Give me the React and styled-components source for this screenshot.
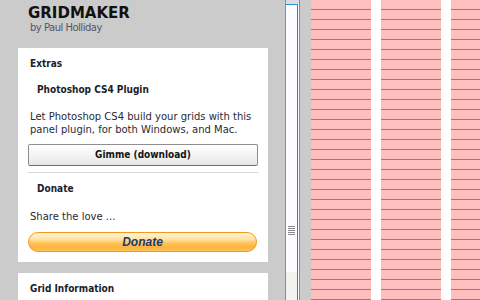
import React from 'react';
import styled, { createGlobalStyle } from 'styled-components';

const Global = createGlobalStyle`
  html, body { margin: 0; padding: 0; background: #cbcbcb; }
  body { width: 480px; height: 300px; overflow: hidden; }
`;

const Page = styled.div`
  display: flex;
  width: 480px;
  height: 300px;
  overflow: hidden;
  background: #cbcbcb;
`;

const Sidebar = styled.aside`
  flex: none;
  width: 285px;
  box-sizing: border-box;
  padding-left: 18px;
  font-family: "DejaVu Sans", Verdana, sans-serif;
  color: #333;
`;

const Header = styled.header`
  height: 48px;
  box-sizing: border-box;
  padding: 4px 0 0 10px;
`;

const Title = styled.h1`
  margin: 0;
  font: bold 15px/18px "DejaVu Sans", Verdana, sans-serif;
  color: #111;
`;

const Byline = styled.div`
  margin-top: 0;
  padding-left: 2px;
  font-size: 10px;
  line-height: 11px;
  letter-spacing: -0.5px;
  color: #5a5462;
`;

const Panel = styled.section`
  width: 250px;
  box-sizing: border-box;
  background: #fff;
  padding: 10px 10px 10px;
  margin-bottom: 11px;
  display: flex;
  flex-direction: column;
`;

const Heading = styled.h2`
  margin: ${p => p.$gap || 0}px 0 0;
  padding-left: ${p => (p.$sub ? 9 : 2)}px;
  font: bold 10px/12px "DejaVu Sans Condensed", "DejaVu Sans", Verdana, sans-serif;
  color: #1d1d28;
`;

const Text = styled.p`
  margin: ${p => p.$gap || 0}px 0 0;
  padding-left: 2px;
  font-size: 10px;
  line-height: 13px;
  color: #2a2a33;
`;

const GrayButton = styled.button`
  margin-top: 8px;
  height: 22px;
  width: 100%;
  box-sizing: border-box;
  border: 1px solid #8f8f8f;
  border-bottom-color: #6e6e6e;
  border-radius: 2px;
  background: linear-gradient(#ffffff, #f4f4f4 50%, #e6e6e6);
  box-shadow: inset 0 1px 0 #fff;
  padding: 0 0 1px;
  font: bold 10px/12px "DejaVu Sans Condensed", "DejaVu Sans", Verdana, sans-serif;
  color: #151515;
`;

const Divider = styled.hr`
  margin: 6px 0 0;
  border: 0;
  height: 1px;
  background: #d3d9dc;
`;

const DonateButton = styled.button`
  margin-top: 9px;
  height: 20px;
  width: 229px;
  box-sizing: border-box;
  border: 1px solid #f39a1e;
  border-radius: 10px;
  background: linear-gradient(#fff4da 0%, #ffe2a4 35%, #ffc45a 55%, #fdb43c 80%, #fbc25a 100%);
  padding: 0;
  font: italic bold 12px/14px "Liberation Sans", Arial, sans-serif;
  color: #1b3a6c;
`;

const ScrollFrame = styled.div`
  flex: none;
  width: 15px;
  height: 300px;
  box-sizing: border-box;
  border-left: 1px solid #8c8c8c;
  border-right: 1px solid #8c8c8c;
  background: #fbfbfd;
  display: flex;
  flex-direction: column;
`;

const ScrollCap = styled.div`
  height: 4px;
  background: #dcdcdc;
`;

const Rail = styled.div`
  flex: 1;
  margin-right: 1px;
  border-top: 1px solid #2791e0;
  border-right: 1px solid #1f86d8;
  display: flex;
  flex-direction: column;
`;

const Thumb = styled.div`
  flex: 1;
  background: #fcfbff;
  display: flex;
  flex-direction: column;
  justify-content: flex-end;
  padding: 0 0 37px 2px;
`;

const RailLower = styled.div`
  height: 28px;
  background: #f1f3ee;
`;

const Grid = styled.div`
  flex: none;
  margin-left: 11px;
  width: 169px;
  height: 300px;
  background: #fff;
  display: flex;
  gap: 10px;
  overflow: hidden;
`;

const Column = styled.div`
  flex: none;
  width: 60px;
  height: 100%;
  background:
    repeating-linear-gradient(to bottom, transparent 0 9px, #f0564c 9px 10px),
    #ffbfbf;
`;

const Grip = () => (
  <svg width="7" height="9" viewBox="0 0 7 9">
    {[0, 2, 4, 6, 8].map(y => (
      <rect key={y} x="0" y={y} width="7" height="1" fill="#8a8a8a" />
    ))}
  </svg>
);

export default function App() {
  return (
    <>
      <Global />
      <Page>
        <Sidebar>
          <Header>
            <Title>GRIDMAKER</Title>
            <Byline>by Paul Holliday</Byline>
          </Header>
          <Panel>
            <Heading>Extras</Heading>
            <Heading $sub $gap={14}>Photoshop CS4 Plugin</Heading>
            <Text $gap={14}>
              Let Photoshop CS4 build your grids with this
              <br />
              panel plugin, for both Windows, and Mac.
            </Text>
            <GrayButton>Gimme (download)</GrayButton>
            <Divider />
            <Heading $sub $gap={10}>Donate</Heading>
            <Text $gap={15}>Share the love ...</Text>
            <DonateButton>Donate</DonateButton>
          </Panel>
          <Panel>
            <Heading>Grid Information</Heading>
          </Panel>
        </Sidebar>
        <ScrollFrame>
          <ScrollCap />
          <Rail>
            <Thumb>
              <Grip />
            </Thumb>
            <RailLower />
          </Rail>
        </ScrollFrame>
        <Grid>
          <Column />
          <Column />
          <Column />
        </Grid>
      </Page>
    </>
  );
}
